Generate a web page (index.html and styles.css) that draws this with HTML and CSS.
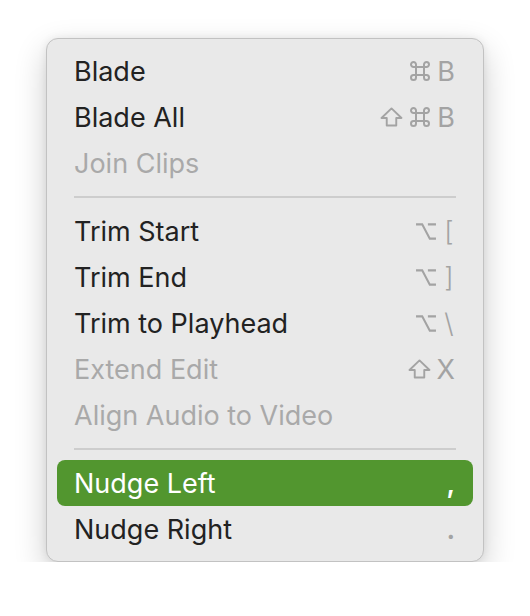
FILE: index.html
```html
<!DOCTYPE html>
<html lang="en">
<head>
  <meta charset="UTF-8">
  <meta name="viewport" content="width=device-width, initial-scale=1.0">
  <title>Edit Menu</title>
  <link rel="stylesheet" href="styles.css">
</head>
<body>
  <div class="menu">
    <div class="item">
      <span class="label">Blade</span>
      <span class="keys">
        <svg class="cmd" viewBox="0 0 22 22"><path d="M7 7V4.5A2.5 2.5 0 1 0 4.5 7H17.5A2.5 2.5 0 1 0 15 4.5V17.5A2.5 2.5 0 1 0 17.5 15H4.5A2.5 2.5 0 1 0 7 17.5Z"/></svg>
        <span>B</span>
      </span>
    </div>
    <div class="item">
      <span class="label">Blade All</span>
      <span class="keys">
        <svg class="shift" viewBox="0 0 24 21"><path d="M12 1.5L22.5 11.5H17V19.5H7V11.5H1.5Z"/></svg>
        <svg class="cmd" viewBox="0 0 22 22"><path d="M7 7V4.5A2.5 2.5 0 1 0 4.5 7H17.5A2.5 2.5 0 1 0 15 4.5V17.5A2.5 2.5 0 1 0 17.5 15H4.5A2.5 2.5 0 1 0 7 17.5Z"/></svg>
        <span>B</span>
      </span>
    </div>
    <div class="item off">
      <span class="label">Join Clips</span>
    </div>

    <div class="sep"></div>

    <div class="item">
      <span class="label">Trim Start</span>
      <span class="keys">
        <svg class="opt" viewBox="0 0 23 20"><path d="M1 2.5H7.5L15.5 17.5H22M13.5 2.5H22"/></svg>
        <span class="br">[</span>
      </span>
    </div>
    <div class="item">
      <span class="label">Trim End</span>
      <span class="keys">
        <svg class="opt" viewBox="0 0 23 20"><path d="M1 2.5H7.5L15.5 17.5H22M13.5 2.5H22"/></svg>
        <span class="br">]</span>
      </span>
    </div>
    <div class="item">
      <span class="label">Trim to Playhead</span>
      <span class="keys">
        <svg class="opt" viewBox="0 0 23 20"><path d="M1 2.5H7.5L15.5 17.5H22M13.5 2.5H22"/></svg>
        <span class="br">\</span>
      </span>
    </div>
    <div class="item off">
      <span class="label">Extend Edit</span>
      <span class="keys">
        <svg class="shift" viewBox="0 0 24 21"><path d="M12 1.5L22.5 11.5H17V19.5H7V11.5H1.5Z"/></svg>
        <span>X</span>
      </span>
    </div>
    <div class="item off">
      <span class="label">Align Audio to Video</span>
    </div>

    <div class="sep"></div>

    <div class="item active">
      <span class="label">Nudge Left</span>
      <span class="keys"><span class="punct">,</span></span>
    </div>
    <div class="item">
      <span class="label">Nudge Right</span>
      <span class="keys"><span class="punct">.</span></span>
    </div>
  </div>
</body>
</html>
```

FILE: styles.css
```css
body { margin: 0; background: #ffffff; font-family: Inter, "Noto Sans", sans-serif; }
.menu { width: 436px; margin: 38px 0 0 46px; padding: 9px 0; background: #e9e9e9; border: 1px solid #c2c2c2; border-radius: 12px; box-shadow: 0 12px 32px rgba(0,0,0,0.2), 0 0 8px rgba(0,0,0,0.07); }
.item { height: 46px; margin: 0 10px; padding: 0 18px 0 17px; display: flex; justify-content: space-between; align-items: center; border-radius: 8px; font-size: 27px; color: #222222; }
.item.off { color: #a9a9a9; }
.item.active { background: #52962f; color: #ffffff; }
.keys { display: flex; align-items: center; gap: 6px; color: #a3a3a3; }
.item.active .keys { color: #ffffff; }
.keys svg { fill: none; stroke: currentColor; stroke-width: 2; stroke-linejoin: round; }
.keys .cmd { width: 22px; height: 22px; }
.keys .shift { width: 23px; height: 20px; }
.keys .opt { width: 22px; height: 19px; stroke-width: 2.2; stroke-linejoin: miter; }
.keys .br { width: 12px; text-align: center; font-weight: 300; }
.keys .punct { font-weight: 600; }
.sep { height: 2px; margin: 10px 27px; background: #cdcdcd; }
```
